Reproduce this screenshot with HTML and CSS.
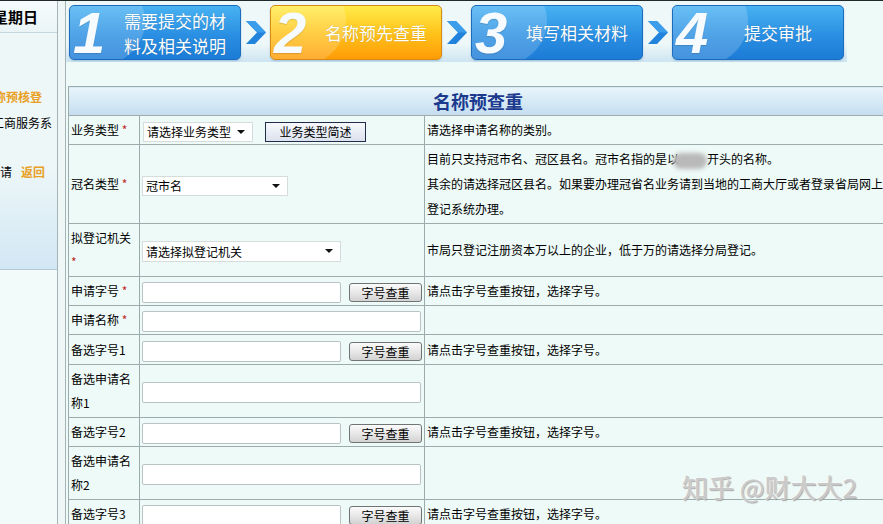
FILE: index.html
```html
<!DOCTYPE html>
<html lang="zh-CN">
<head>
  <meta charset="UTF-8" />
  <title>名称预查重</title>
  <link rel="stylesheet" href="styles.css">
</head>
<body>
  <div class="page">
    <div class="sidebar">
      <div class="side-head">星期日</div>
      <div class="side-box">
        <div class="side-link">称预核登</div>
        <div class="side-text">工商服务系</div>
        <div class="side-back">请<a href="#">返回</a></div>
      </div>
    </div>

    <div class="main">
      <div class="steps">
        <div class="step blue">
          <span class="num">1</span>
          <span class="step-text">需要提交的材<br>料及相关说明</span>
        </div>
        <svg class="arrow" width="20" height="23" viewBox="0 0 20 23">
          <polygon points="0,0 9,0 20,11.5 9,23 0,23 11,11.5" fill="#2283dc" />
          <polygon points="0,0 9,0 20,11.5 11,11.5" fill="#3c9eea" />
        </svg>
        <div class="step orange">
          <span class="num">2</span>
          <span class="step-text">名称预先查重</span>
        </div>
        <svg class="arrow" width="20" height="23" viewBox="0 0 20 23">
          <polygon points="0,0 9,0 20,11.5 9,23 0,23 11,11.5" fill="#2283dc" />
          <polygon points="0,0 9,0 20,11.5 11,11.5" fill="#3c9eea" />
        </svg>
        <div class="step blue">
          <span class="num">3</span>
          <span class="step-text">填写相关材料</span>
        </div>
        <svg class="arrow" width="20" height="23" viewBox="0 0 20 23">
          <polygon points="0,0 9,0 20,11.5 9,23 0,23 11,11.5" fill="#2283dc" />
          <polygon points="0,0 9,0 20,11.5 11,11.5" fill="#3c9eea" />
        </svg>
        <div class="step blue">
          <span class="num">4</span>
          <span class="step-text">提交审批</span>
        </div>
      </div>

      <table class="form">
        <colgroup>
          <col class="c1">
          <col class="c2">
          <col class="c3">
        </colgroup>
        <tr>
          <th colspan="3">名称预查重</th>
        </tr>
        <tr>
          <td class="label">业务类型 <span class="req">*</span></td>
          <td class="field">
            <span class="sel w110"><select><option>请选择业务类型</option></select></span><button class="btn-dark">业务类型简述</button>
          </td>
          <td class="desc">请选择申请名称的类别。</td>
        </tr>
        <tr>
          <td class="label">冠名类型 <span class="req">*</span></td>
          <td class="field">
            <span class="sel w146"><select><option>冠市名</option></select></span>
          </td>
          <td class="desc long">目前只支持冠市名、冠区县名。冠市名指的是以<span class="blur"></span>开头的名称。<br>其余的请选择冠区县名。如果要办理冠省名业务请到当地的工商大厅或者登录省局网上登记系统办理。</td>
        </tr>
        <tr>
          <td class="label">拟登记机关 <span class="req">*</span></td>
          <td class="field">
            <span class="sel w199"><select><option>请选择拟登记机关</option></select></span>
          </td>
          <td class="desc">市局只登记注册资本万以上的企业，低于万的请选择分局登记。</td>
        </tr>
        <tr>
          <td class="label">申请字号 <span class="req">*</span></td>
          <td class="field"><input type="text" class="txt"><button class="btn">字号查重</button></td>
          <td class="desc">请点击字号查重按钮，选择字号。</td>
        </tr>
        <tr>
          <td class="label">申请名称 <span class="req">*</span></td>
          <td class="field"><input type="text" class="txt wide"></td>
          <td class="desc"></td>
        </tr>
        <tr>
          <td class="label">备选字号1</td>
          <td class="field"><input type="text" class="txt"><button class="btn">字号查重</button></td>
          <td class="desc">请点击字号查重按钮，选择字号。</td>
        </tr>
        <tr>
          <td class="label">备选申请名称1</td>
          <td class="field"><input type="text" class="txt wide"></td>
          <td class="desc"></td>
        </tr>
        <tr>
          <td class="label">备选字号2</td>
          <td class="field"><input type="text" class="txt"><button class="btn">字号查重</button></td>
          <td class="desc">请点击字号查重按钮，选择字号。</td>
        </tr>
        <tr>
          <td class="label">备选申请名称2</td>
          <td class="field"><input type="text" class="txt wide"></td>
          <td class="desc"></td>
        </tr>
        <tr>
          <td class="label">备选字号3</td>
          <td class="field"><input type="text" class="txt"><button class="btn">字号查重</button></td>
          <td class="desc">请点击字号查重按钮，选择字号。</td>
        </tr>
        <tr>
          <td class="label">备选申请名称3</td>
          <td class="field"><input type="text" class="txt wide"></td>
          <td class="desc"></td>
        </tr>
      </table>
    </div>
  </div>

  <div class="watermark">知乎 @财大大2</div>
</body>
</html>
```

FILE: styles.css
```css
html, body {
  margin: 0;
  height: 100%;
  overflow: hidden;
}

body {
  background: #eef6f6;
  border-top: 1px solid #1f2a2a;
  box-sizing: border-box;
  font-family: "Noto Sans CJK SC", sans-serif;
  font-size: 12px;
  color: #000;
  position: relative;
}

.page {
  display: flex;
  height: 100%;
}

/* left column */
.sidebar {
  width: 57px;
  flex: none;
  margin-right: 7px;
  border-right: 1px solid #a4b4b8;
  background: #f2fafa;
  overflow: hidden;
  white-space: nowrap;
}

.side-head {
  height: 31px;
  line-height: 31px;
  font-size: 15px;
  font-weight: bold;
  text-indent: -7px;
  border-bottom: 1px solid #c4d6de;
  background: linear-gradient(#f6fcfc, #eaf4f6);
}

.side-box {
  height: 237px;
  padding-top: 51px;
  box-sizing: border-box;
  background: linear-gradient(#eef7f8 0%, #eef7f8 55%, #d2e7f4 100%);
  border-bottom: 1px solid #b4cad6;
}

.side-link {
  line-height: 26px;
  text-indent: -6px;
  color: #e8a126;
  font-weight: bold;
}

.side-text {
  line-height: 26px;
  text-indent: -8px;
}

.side-back {
  line-height: 26px;
  margin-top: 23px;
}

.side-back a {
  margin-left: 9px;
  color: #e8a126;
  font-weight: bold;
  text-decoration: none;
}

/* right column */
.main {
  flex: 1;
  min-width: 0;
  border-left: 1px solid #a4b4b6;
  background: #eefaf7;
}

.steps {
  display: flex;
  align-items: center;
  width: 778px;
  padding: 4px 0 2px 3px;
  background: linear-gradient(#eef8f8 70%, #cde4f2);
}

.step {
  position: relative;
  display: flex;
  align-items: center;
  width: 172px;
  height: 55px;
  box-sizing: border-box;
  border-radius: 5px;
  overflow: hidden;
  color: #fff;
  box-shadow: 0 1px 2px rgba(60, 120, 170, 0.35);
}

.step::before {
  content: "";
  position: absolute;
  left: -20px;
  top: -30px;
  width: 95px;
  height: 90px;
  border-radius: 50%;
  background: rgba(255, 255, 255, 0.18);
}

.blue {
  border: 1px solid #1b6cbc;
  background: linear-gradient(#48b2f2, #2a8fe2 55%, #1c7bd6);
}

.orange {
  border: 1px solid #d98a12;
  background: linear-gradient(#ffec4a, #ffc41c 50%, #ff9c06);
}

.num {
  position: relative;
  width: 46px;
  flex: none;
  padding-left: 3px;
  font-family: "Liberation Sans", Arial, sans-serif;
  font-size: 58px;
  font-weight: bold;
  font-style: italic;
  line-height: 1;
  color: #f6fbff;
  text-shadow: 0 1px 1px rgba(0, 0, 0, 0.15);
}

.step-text {
  position: relative;
  flex: 1;
  padding-right: 9px;
  font-size: 17px;
  line-height: 25px;
  text-align: center;
  white-space: nowrap;
  text-shadow: 0 0 1px rgba(0, 0, 0, 0.25);
}

.arrow {
  flex: none;
  margin: 0 4px 0 5px;
}

/* form table */
.form {
  margin: 24px 0 0 2px;
  width: 820px;
  border-collapse: collapse;
  table-layout: fixed;
}

.c1 { width: 71px; }
.c2 { width: 285px; }

.form th,
.form td {
  border: 1px solid #9cabab;
}

.form th {
  height: 28px;
  padding: 0;
  font-size: 18px;
  font-weight: bold;
  color: #1b3a8e;
  background: linear-gradient(#e8f5fc, #c5ddef);
}

.label {
  padding: 2px 2px;
  line-height: 24px;
  vertical-align: middle;
}

.req {
  color: #c02828;
}

.field {
  padding: 2px 2px;
  line-height: 24px;
  white-space: nowrap;
  vertical-align: middle;
}

.desc {
  padding: 2px 2px;
  line-height: 24px;
  vertical-align: middle;
}

.desc.long {
  padding: 1px 2px 2px;
  line-height: 25px;
}

.blur {
  display: inline-block;
  width: 34px;
  height: 16px;
  margin-left: -6px;
  vertical-align: middle;
  border-radius: 8px;
  background: #b9b9b9;
  filter: blur(2px);
}

.sel {
  position: relative;
  display: inline-block;
  vertical-align: middle;
}

.sel select {
  appearance: none;
  -webkit-appearance: none;
  display: block;
  height: 20px;
  width: 100%;
  padding: 0 0 0 3px;
  border: 1px solid #d4dcdc;
  background: #fff;
  font-family: "Noto Sans CJK SC", sans-serif;
  font-size: 12px;
  color: #000;
}

.sel::after {
  content: "";
  position: absolute;
  right: 8px;
  top: 8px;
  border-left: 4px solid transparent;
  border-right: 4px solid transparent;
  border-top: 4px solid #111;
}

.w110 { width: 110px; margin-left: 1px; }
.w146 { width: 146px; }
.w199 { width: 199px; }
.w199 select { height: 21px; }

.txt {
  width: 199px;
  height: 21px;
  box-sizing: border-box;
  padding: 0 3px;
  vertical-align: middle;
  border: 1px solid #b9c3c3;
  border-radius: 2px;
  background: #fff;
}

.txt.wide {
  width: 279px;
}

.btn {
  width: 73px;
  height: 19px;
  margin-left: 8px;
  padding: 0;
  vertical-align: middle;
  border: 1px solid #6f7474;
  border-radius: 3px;
  background: linear-gradient(#fbfbfb, #e4e4e4 60%, #d2d2d2);
  font-family: "Noto Sans CJK SC", sans-serif;
  font-size: 12px;
  line-height: 17px;
  color: #000;
}

.btn-dark {
  width: 101px;
  height: 20px;
  margin-left: 12px;
  padding: 0;
  vertical-align: middle;
  border: 1px solid #1f2d4a;
  background: linear-gradient(#f6f8fc, #dce2ee);
  font-family: "Noto Sans CJK SC", sans-serif;
  font-size: 12px;
  line-height: 18px;
  color: #000;
}

.watermark {
  position: absolute;
  left: 682px;
  top: 467px;
  font-size: 26px;
  color: #c9c9c9;
  text-shadow: 0 0 2px #fff, 1px 1px 1px #8f8f8f;
  white-space: nowrap;
}
```
